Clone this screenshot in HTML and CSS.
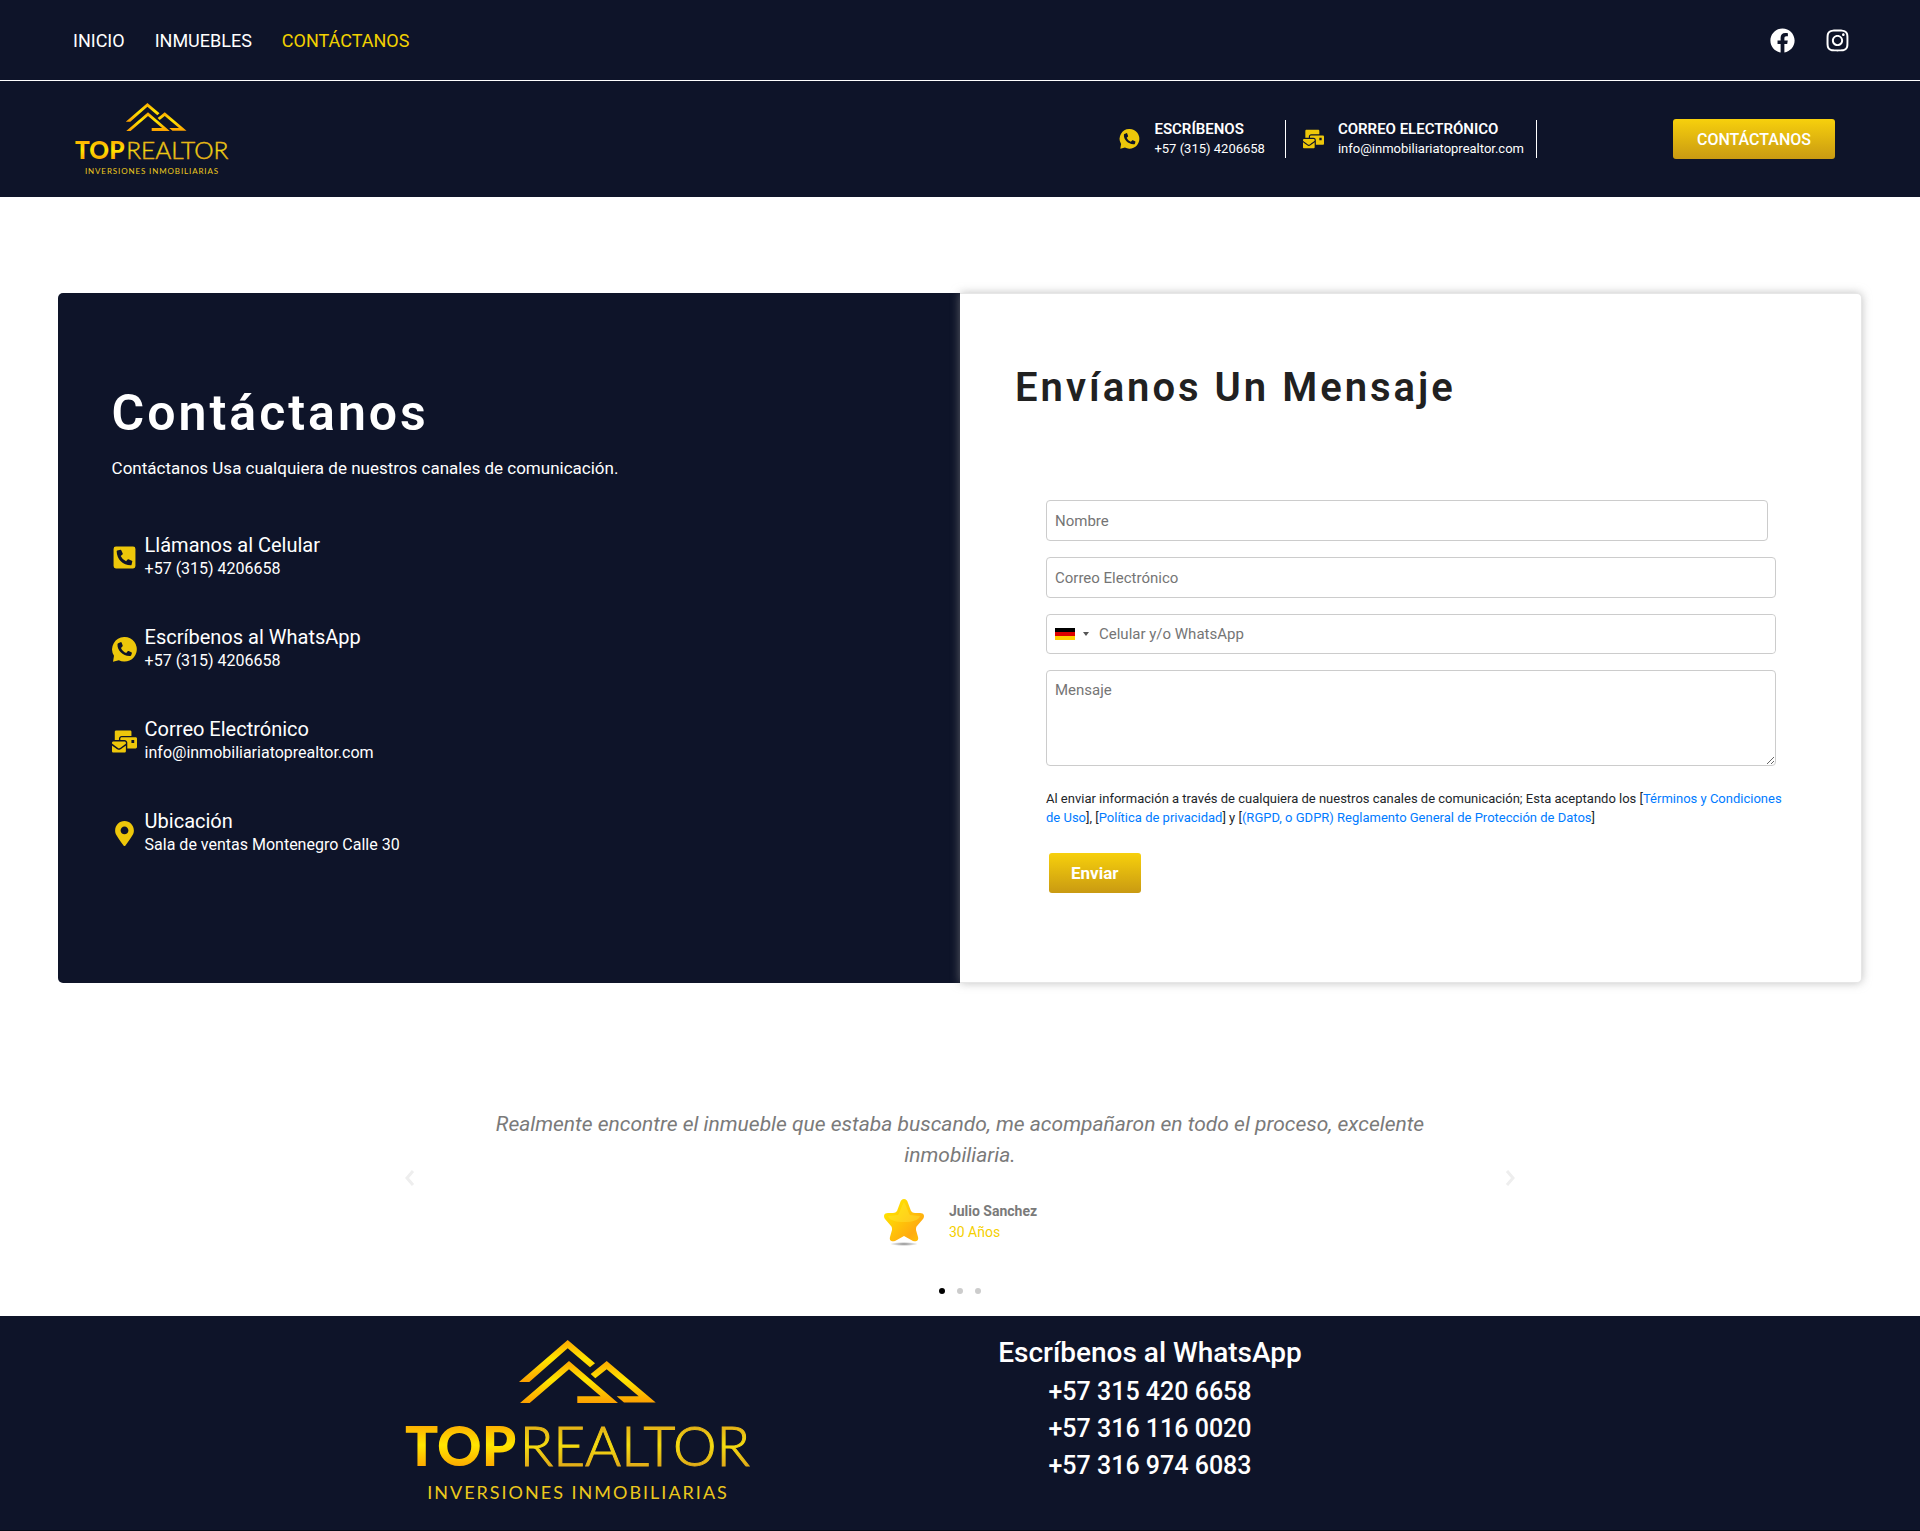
FILE: index.html
```html
<!DOCTYPE html>
<html lang="es">
<head>
    <meta charset="UTF-8">
    <meta name="viewport" content="width=device-width, initial-scale=1.0">
    <title>Contáctanos - Top Realtor</title>
    <link rel="stylesheet" href="styles.css">
</head>
<body>
    <!-- Shared icons -->
    <svg class="sprite" aria-hidden="true">
        <defs>
            <linearGradient id="goldRoof" x1="0" y1="0" x2="0" y2="1">
                <stop offset="0" stop-color="#fca600"/>
                <stop offset="0.45" stop-color="#ffe600"/>
                <stop offset="1" stop-color="#fca000"/>
            </linearGradient>
            <linearGradient id="goldTop" x1="0" y1="82" x2="0" y2="128" gradientUnits="userSpaceOnUse">
                <stop offset="0" stop-color="#fca600"/>
                <stop offset="0.5" stop-color="#ffe600"/>
                <stop offset="1" stop-color="#fca600"/>
            </linearGradient>
            <linearGradient id="goldThin" x1="0" y1="82" x2="0" y2="128" gradientUnits="userSpaceOnUse">
                <stop offset="0" stop-color="#e0a818"/>
                <stop offset="0.5" stop-color="#f5dc10"/>
                <stop offset="1" stop-color="#e0a818"/>
            </linearGradient>
        </defs>
        <symbol id="logo" viewBox="0 0 346 162">
            <path d="M114 42L162.700 0 190 23.300 185 27.300 162.700 8.300 124.300 42z" fill="url(#goldRoof)"/>
            <path d="M115 63L164 21 213 63H172.300V56.300H195.700L164 29.300 124.700 63z" fill="url(#goldRoof)"/>
            <path d="M185.700 34L201.700 21 250.700 62.500H219L211.700 56.300H233.700L201.700 29.300 190.300 38.300z" fill="url(#goldRoof)"/>
            <text class="logo-top" x="0" y="126" fill="url(#goldTop)">TOP</text>
            <text class="logo-realtor" x="345" y="126" text-anchor="end" fill="url(#goldThin)" stroke="url(#goldThin)">REALTOR</text>
            <text class="logo-tagline" x="173" y="159" text-anchor="middle">INVERSIONES INMOBILIARIAS</text>
        </symbol>
        <symbol id="facebook" viewBox="0 0 512 512">
            <path d="M504 256C504 119 393 8 256 8S8 119 8 256c0 123.780 90.690 226.380 209.250 245V327.690h-63V256h63v-54.640c0-62.150 37-96.480 93.670-96.480 27.140 0 55.520 4.840 55.520 4.840v61h-31.280c-30.800 0-40.410 19.120-40.410 38.730V256h68.780l-11 71.690h-57.780V501C413.310 482.380 504 379.780 504 256z"/>
        </symbol>
        <symbol id="instagram" viewBox="0 0 448 512">
            <path d="M224.100 141c-63.600 0-114.900 51.300-114.900 114.900s51.300 114.900 114.900 114.900S339 319.500 339 255.900 287.700 141 224.100 141zm0 189.600c-41.100 0-74.700-33.500-74.700-74.700s33.500-74.700 74.700-74.700 74.700 33.500 74.700 74.700-33.600 74.700-74.700 74.700zm146.400-194.300c0 14.900-12 26.800-26.800 26.800-14.900 0-26.800-12-26.800-26.800s12-26.800 26.800-26.800 26.800 12 26.800 26.800zm76.100 27.200c-1.700-35.900-9.900-67.700-36.200-93.900-26.200-26.200-58-34.400-93.900-36.200-37-2.100-147.900-2.100-184.900 0-35.800 1.700-67.600 9.900-93.900 36.100s-34.400 58-36.200 93.900c-2.100 37-2.100 147.900 0 184.900 1.700 35.900 9.900 67.700 36.200 93.900s58 34.400 93.900 36.200c37 2.100 147.900 2.100 184.900 0 35.900-1.700 67.700-9.900 93.900-36.200 26.200-26.200 34.400-58 36.200-93.900 2.100-37 2.100-147.800 0-184.800zM398.800 388c-7.800 19.600-22.900 34.700-42.600 42.600-29.500 11.700-99.500 9-132.100 9s-102.700 2.600-132.100-9c-19.600-7.800-34.700-22.900-42.600-42.600-11.700-29.500-9-99.500-9-132.100s-2.600-102.700 9-132.100c7.800-19.600 22.900-34.700 42.600-42.600 29.500-11.700 99.500-9 132.100-9s102.700-2.600 132.100 9c19.600 7.800 34.700 22.900 42.600 42.600 11.700 29.500 9 99.500 9 132.100s2.700 102.700-9 132.100z"/>
        </symbol>
        <symbol id="phone" viewBox="0 0 448 512">
            <path d="M400 32H48A48 48 0 0 0 0 80v352a48 48 0 0 0 48 48h352a48 48 0 0 0 48-48V80a48 48 0 0 0-48-48zm-16.390 307.370l-15 65A15 15 0 0 1 354 416C194 416 64 286.290 64 126a15.700 15.700 0 0 1 11.630-14.610l65-15A18.230 18.230 0 0 1 144 96a16.270 16.270 0 0 1 13.790 9.090l30 70A17.900 17.900 0 0 1 189 181a17 17 0 0 1-5.500 11.610l-37.890 31a231.910 231.910 0 0 0 110.780 110.780l31-37.890A17 17 0 0 1 299 291a17.850 17.850 0 0 1 5.910 1.210l70 30A16.250 16.250 0 0 1 384 336a17.410 17.410 0 0 1-.390 3.370z"/>
        </symbol>
        <symbol id="whatsapp" viewBox="0 0 25 25">
            <path d="M12.700 0A12.300 12.300 0 1 1 6.800 23.200L1 24.800 2 18.800A12.300 12.300 0 0 1 12.700 0z"/>
            <path class="icon-hole" d="M6.200 6.300L8.600 5.200C9 5 9.400 5.200 9.600 5.600L10.700 8.600C10.800 9 10.700 9.300 10.400 9.600L9 10.900C10 13.300 11.900 15 14.200 15.900L15.700 14.300C15.900 14 16.300 13.900 16.700 14.100L19.400 15.300C19.800 15.500 20 15.900 19.900 16.300L19.200 18.300C19 18.800 18.700 19 18.200 19 11 19.400 5 13.500 5.500 7.300 5.500 6.800 5.800 6.500 6.200 6.300z"/>
        </symbol>
        <symbol id="mail" viewBox="0 0 576 512">
            <path d="M160 448c-25.600 0-51.200-22.400-64-32-64-44.800-83.200-60.800-96-70.400V480c0 17.670 14.330 32 32 32h256c17.670 0 32-14.330 32-32V345.600c-12.800 9.600-32 25.600-96 70.400-12.800 9.600-38.400 32-64 32zm128-192H32c-17.670 0-32 14.330-32 32v16c25.600 19.200 22.400 19.200 115.200 86.400 9.600 6.400 28.800 25.600 44.800 25.600s35.200-19.200 44.800-22.400c92.800-67.200 89.600-67.200 115.200-86.400V288c0-17.670-14.330-32-32-32zm256-96H224c-17.670 0-32 14.330-32 32v32h96c33.210 0 60.590 25.420 63.710 57.820l.290-.220V416h192c17.670 0 32-14.330 32-32V192c0-17.670-14.330-32-32-32zm-32 128h-64v-64h64v64zm-352-96c0-35.290 28.710-64 64-64h224V32c0-17.670-14.330-32-32-32H96C78.330 0 64 14.330 64 32v192h96v-32z"/>
        </symbol>
        <symbol id="marker" viewBox="0 0 384 512">
            <path d="M172.268 501.670C26.970 291.031 0 269.413 0 192 0 85.961 85.961 0 192 0s192 85.961 192 192c0 77.413-26.970 99.031-172.268 309.670-9.535 13.774-29.930 13.773-39.464 0zM192 272c44.183 0 80-35.817 80-80s-35.817-80-80-80-80 35.817-80 80 35.817 80 80 80z"/>
        </symbol>
    </svg>

    <header class="header">
        <div class="topbar">
            <nav class="menu">
                <a href="#">INICIO</a>
                <a href="#">INMUEBLES</a>
                <a href="#" class="active">CONTÁCTANOS</a>
            </nav>
            <div class="social">
                <a href="#" aria-label="Facebook"><svg><use href="#facebook"/></svg></a>
                <a href="#" aria-label="Instagram"><svg><use href="#instagram"/></svg></a>
            </div>
        </div>
        <div class="mainbar">
            <a href="#" class="brand" aria-label="Top Realtor"><svg viewBox="0 0 346 162"><use href="#logo"/></svg></a>
            <div class="quick">
                <div class="quick-item">
                    <svg><use href="#whatsapp"/></svg>
                    <div>
                        <strong>ESCRÍBENOS</strong>
                        <span>+57 (315) 4206658</span>
                    </div>
                </div>
                <div class="quick-item">
                    <svg><use href="#mail"/></svg>
                    <div>
                        <strong>CORREO ELECTRÓNICO</strong>
                        <span>info@inmobiliariatoprealtor.com</span>
                    </div>
                </div>
            </div>
            <a href="#" class="btn btn-contact">CONTÁCTANOS</a>
        </div>
    </header>

    <main>
        <section class="contact">
            <div class="info">
                <h1>Contáctanos</h1>
                <p class="lead">Contáctanos Usa cualquiera de nuestros canales de comunicación.</p>
                <ul class="channels">
                    <li>
                        <svg><use href="#phone"/></svg>
                        <div>
                            <h2>Llámanos al Celular</h2>
                            <p>+57 (315) 4206658</p>
                        </div>
                    </li>
                    <li>
                        <svg><use href="#whatsapp"/></svg>
                        <div>
                            <h2>Escríbenos al WhatsApp</h2>
                            <p>+57 (315) 4206658</p>
                        </div>
                    </li>
                    <li>
                        <svg><use href="#mail"/></svg>
                        <div>
                            <h2>Correo Electrónico</h2>
                            <p>info@inmobiliariatoprealtor.com</p>
                        </div>
                    </li>
                    <li>
                        <svg><use href="#marker"/></svg>
                        <div>
                            <h2>Ubicación</h2>
                            <p>Sala de ventas Montenegro Calle 30</p>
                        </div>
                    </li>
                </ul>
            </div>

            <div class="message">
                <h2>Envíanos Un Mensaje</h2>
                <form id="contactForm">
                    <div class="field field-name">
                        <input type="text" id="nombre" name="nombre" placeholder="Nombre" aria-label="Nombre" required>
                    </div>
                    <div class="field">
                        <input type="email" id="correo" name="correo" placeholder="Correo Electrónico" aria-label="Correo Electrónico" required>
                    </div>
                    <div class="field phone-field">
                        <button type="button" class="country" aria-label="País">
                            <svg class="flag" viewBox="0 0 20 12">
                                <rect width="20" height="4" fill="#000"/>
                                <rect y="4" width="20" height="4" fill="#d00"/>
                                <rect y="8" width="20" height="4" fill="#ffce00"/>
                            </svg>
                            <span class="caret"></span>
                        </button>
                        <input type="tel" id="celular" name="celular" placeholder="Celular y/o WhatsApp" aria-label="Celular y/o WhatsApp" required>
                    </div>
                    <div class="field">
                        <textarea id="mensaje" name="mensaje" placeholder="Mensaje" aria-label="Mensaje"></textarea>
                    </div>
                    <p class="legal">Al enviar información a través de cualquiera de nuestros canales de comunicación; Esta aceptando los [<a href="#">Términos y Condiciones de Uso</a>], [<a href="#">Política de privacidad</a>] y [<a href="#">(RGPD, o GDPR) Reglamento General de Protección de Datos</a>]</p>
                    <button type="submit" class="btn btn-send">Enviar</button>
                </form>
            </div>
        </section>

        <section class="testimonials">
            <div class="carousel">
                <button type="button" class="arrow" aria-label="Anterior">
                    <svg viewBox="0 0 10 18"><path d="M8 2L2 9l6 7"/></svg>
                </button>
                <div class="slide">
                    <blockquote>Realmente encontre el inmueble que estaba buscando, me acompañaron en todo el proceso, excelente inmobiliaria.</blockquote>
                    <div class="author">
                        <svg class="star" viewBox="0 0 42 48">
                            <defs>
                                <linearGradient id="starFill" x1="0" y1="0" x2="1" y2="1">
                                    <stop offset="0.2" stop-color="#ffe000"/>
                                    <stop offset="0.75" stop-color="#ffab10"/>
                                    <stop offset="1" stop-color="#ffc800"/>
                                </linearGradient>
                                <radialGradient id="starShadow">
                                    <stop offset="0" stop-color="#8a8a8a"/>
                                    <stop offset="1" stop-color="#8a8a8a" stop-opacity="0"/>
                                </radialGradient>
                            </defs>
                            <ellipse cx="21" cy="46" rx="14" ry="2" fill="url(#starShadow)"/>
                            <path d="M21 1c2 0 3 1 4 4l3 8c1 1 2 2 4 2l5 0c4 0 5 3 3 6l-6 7c-1 1-1 2-1 4l2 7c1 4-2 5-5 4l-9-5-9 5c-3 1-6 0-5-4l2-7c0-2 0-3-1-4l-6-7c-2-3-1-6 3-6l5 0c2 0 3-1 4-2l3-8c1-3 2-4 4-4z" fill="url(#starFill)"/>
                            <path d="M21 4c3 5 4 10 6 13l10 1c-1 4-7 6-16 6S6 22 5 18l10-1c2-3 3-8 6-13z" fill="#ffe93a" opacity="0.4"/>
                        </svg>
                        <div>
                            <strong>Julio Sanchez</strong>
                            <span>30 Años</span>
                        </div>
                    </div>
                </div>
                <button type="button" class="arrow" aria-label="Siguiente">
                    <svg viewBox="0 0 10 18"><path d="M2 2l6 7-6 7"/></svg>
                </button>
            </div>
            <div class="dots">
                <span class="on"></span>
                <span></span>
                <span></span>
            </div>
        </section>
    </main>

    <footer class="footer">
        <div class="footer-inner">
            <div class="footer-logo">
                <svg viewBox="0 0 346 162" role="img" aria-label="Top Realtor"><use href="#logo"/></svg>
            </div>
            <div class="footer-contact">
                <h2>Escríbenos al WhatsApp</h2>
                <a href="#">+57 315 420 6658</a>
                <a href="#">+57 316 116 0020</a>
                <a href="#">+57 316 974 6083</a>
            </div>
        </div>
    </footer>
</body>
</html>
```

FILE: styles.css
```css
* {
    box-sizing: border-box;
}
body {
    margin: 0;
    font-family: Roboto, "Liberation Sans", sans-serif;
    font-size: 16px;
    color: #212529;
    background-color: #fff;
}
a {
    text-decoration: none;
}
h1, h2, p, ul, blockquote {
    margin: 0;
    padding: 0;
}
input, textarea, button {
    font-family: inherit;
}
.sprite {
    position: absolute;
    width: 0;
    height: 0;
}

/* Header */
.header {
    background-color: #0e1429;
    color: #fff;
}
.topbar {
    display: flex;
    justify-content: space-between;
    align-items: center;
    height: 81px;
    padding: 0 70px 0 73px;
    border-bottom: 1px solid #fff;
}
.menu {
    display: flex;
    gap: 30px;
}
.menu a {
    color: #fff;
    font-size: 18px;
}
.menu a.active {
    color: #f2d100;
}
.social {
    display: flex;
    gap: 30px;
}
.social svg {
    display: block;
    width: 25px;
    height: 25px;
    fill: #fff;
}
.mainbar {
    display: flex;
    align-items: center;
    height: 116px;
    padding: 0 85px 0 75px;
}
.brand svg {
    display: block;
    width: 154px;
    height: 72px;
}
.quick {
    display: flex;
    gap: 17px;
    margin-left: auto;
    margin-right: 136px;
}
.quick-item {
    display: flex;
    align-items: center;
    gap: 14px;
    padding-right: 12px;
    border-right: 1px solid #fff;
}
.quick-item:first-child {
    padding-right: 20px;
}
.quick-item svg {
    width: 21px;
    height: 20px;
    fill: #edc70a;
}
.quick-item strong,
.quick-item span {
    display: block;
    line-height: 19px;
}
.quick-item strong {
    font-size: 15px;
    font-weight: 600;
}
.quick-item span {
    font-size: 13px;
}
.icon-hole {
    fill: #0e1429;
}
.btn {
    display: inline-flex;
    align-items: center;
    justify-content: center;
    height: 40px;
    border: none;
    border-radius: 3px;
    color: #fff;
    background-image: linear-gradient(180deg, #f7d00c 0%, #c99a12 100%);
    cursor: pointer;
}
.btn-contact {
    padding: 0 24px;
    font-size: 16px;
    font-weight: 500;
}

/* Contact section */
.contact {
    display: grid;
    grid-template-columns: 1fr 1fr;
    margin: 96px 3% 0;
}
.info {
    padding: 90px 54px 115px;
    background-color: #0e1429;
    color: #fff;
    border-radius: 5px 0 0 5px;
}
.info h1 {
    font-size: 50px;
    font-weight: 600;
    line-height: 60px;
    letter-spacing: 3px;
}
.lead {
    margin-top: 12px;
    font-size: 17px;
    line-height: 26px;
}
.channels {
    display: flex;
    flex-direction: column;
    gap: 46px;
    margin-top: 53px;
    list-style: none;
}
.channels li {
    display: flex;
    align-items: center;
    gap: 8px;
}
.channels svg {
    width: 25px;
    height: 25px;
    fill: #edc70a;
}
.channels h2 {
    font-size: 20px;
    font-weight: 400;
    line-height: 23px;
}
.channels p {
    font-size: 16px;
    line-height: 23px;
}
.message {
    padding: 70px 76px 89px 55px;
    background-color: #fff;
    border: 1px solid #e6e6e6;
    border-left: none;
    border-radius: 0 5px 5px 0;
    box-shadow: 0 0 10px rgba(150, 150, 150, 0.6);
}
.message h2 {
    color: #212121;
    font-size: 40px;
    font-weight: 600;
    line-height: 48px;
    letter-spacing: 3px;
}
#contactForm {
    margin-top: 88px;
    padding-left: 31px;
}
.field {
    display: flex;
    margin: 0 9px 16px 0;
}
.field-name {
    margin-right: 17px;
}
.field input,
.field textarea {
    width: 100%;
    height: 41px;
    padding: 0 8px;
    border: 1px solid #ccc;
    border-radius: 4px;
    background-color: #fff;
    color: #212529;
    font-size: 15px;
}
.field textarea {
    height: 96px;
    padding-top: 10px;
}
.field ::placeholder {
    color: #757575;
}
.phone-field {
    border: 1px solid #ccc;
    border-radius: 4px;
}
.phone-field input {
    height: 38px;
    padding-left: 0;
    border: none;
}
.country {
    display: flex;
    align-items: center;
    gap: 8px;
    padding: 0 10px 0 8px;
    border: none;
    background: none;
}
.flag {
    width: 20px;
    height: 12px;
}
.caret {
    border-left: 3px solid transparent;
    border-right: 3px solid transparent;
    border-top: 4px solid #555;
}
.legal {
    margin-top: 23px;
    font-size: 13px;
    line-height: 19px;
}
.legal a {
    color: #007bff;
}
.btn-send {
    margin: 26px 0 0 3px;
    padding: 0 22px;
    font-size: 17px;
    font-weight: 700;
}

/* Testimonials */
.testimonials {
    max-width: 1110px;
    margin: 126px auto 0;
    padding-bottom: 22px;
}
.carousel {
    display: flex;
    align-items: center;
    justify-content: space-between;
}
.arrow {
    padding: 0;
    border: none;
    background: none;
}
.arrow svg {
    display: block;
    width: 10px;
    height: 18px;
    fill: none;
    stroke: #eee;
    stroke-width: 3px;
}
.slide {
    max-width: 940px;
    text-align: center;
}
.slide blockquote {
    color: #7a7a7a;
    font-size: 21px;
    font-style: italic;
    line-height: 31px;
}
.author {
    display: flex;
    align-items: center;
    justify-content: center;
    gap: 24px;
    margin-top: 27px;
    text-align: left;
}
.star {
    width: 42px;
    height: 48px;
}
.author strong,
.author span {
    display: block;
    font-size: 14px;
    line-height: 21px;
}
.author strong {
    color: #7a7a7a;
    font-weight: 700;
}
.author span {
    color: #f5d000;
}
.dots {
    display: flex;
    justify-content: center;
    gap: 12px;
    margin-top: 42px;
}
.dots span {
    width: 6px;
    height: 6px;
    border-radius: 50%;
    background-color: #ccc;
}
.dots .on {
    background-color: #000;
}

/* Footer */
.footer {
    background-color: #0e1429;
    color: #fff;
    border-bottom: 1px solid #060a18;
}
.footer-inner {
    display: grid;
    grid-template-columns: 3fr 2fr 1fr;
    max-width: 1140px;
    margin: 0 auto;
    padding: 17px 0 28px;
}
.footer-logo {
    padding: 7px 0 0 15px;
}
.footer-logo svg {
    display: block;
    width: 346px;
    height: 162px;
}
.footer-contact {
    display: flex;
    flex-direction: column;
    align-items: center;
}
.footer-contact h2 {
    font-size: 28px;
    font-weight: 500;
    line-height: 40px;
}
.footer-contact a {
    color: #fff;
    font-size: 25px;
    font-weight: 500;
    line-height: 37px;
}

/* Logo lettering */
.logo-top,
.logo-realtor,
.logo-tagline {
    font-family: Lato, "Liberation Sans", sans-serif;
}
.logo-top {
    font-size: 55px;
    font-weight: 900;
}
.logo-realtor {
    font-size: 55px;
    font-weight: 300;
    stroke-width: 1px;
}
.logo-tagline {
    font-size: 18px;
    letter-spacing: 2px;
    fill: #ecc81c;
}
```
